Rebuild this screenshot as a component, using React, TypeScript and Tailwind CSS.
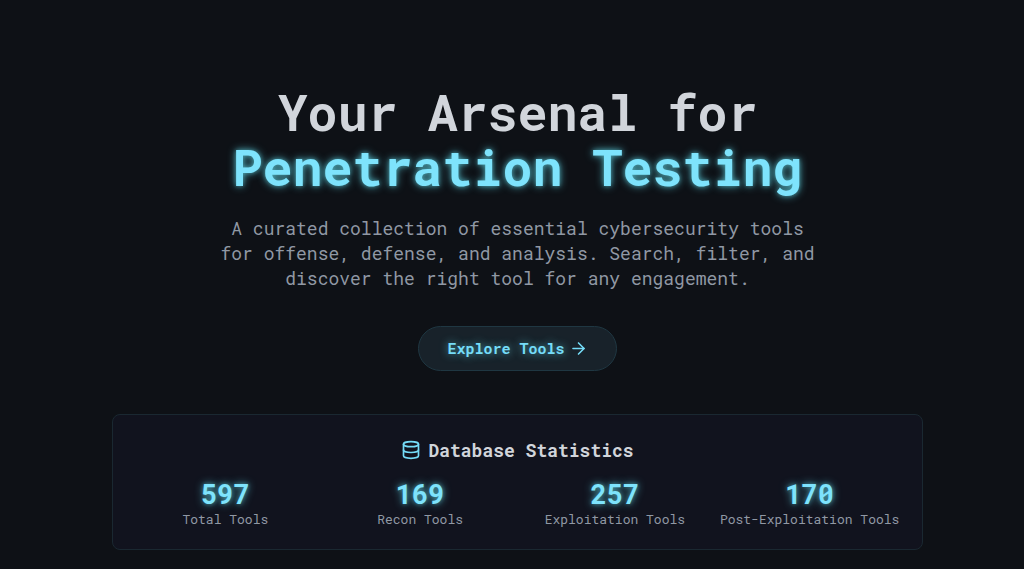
import { ArrowRight, Database } from "lucide-react";

const stats = [
  { value: 597, label: "Total Tools" },
  { value: 169, label: "Recon Tools" },
  { value: 257, label: "Exploitation Tools" },
  { value: 170, label: "Post-Exploitation Tools" },
];

function Hero() {
  return (
    <section className="flex flex-col items-center text-center">
      <h1 className="text-[50px] leading-[55px] font-bold text-[#d1d5db]">
        Your Arsenal for
        <span className="block text-[#7ee3fc] [text-shadow:0_0_8px_#67e8f9aa,0_0_4px_#67e8f966]">
          Penetration Testing
        </span>
      </h1>
      <p className="mt-[21px] max-w-[610px] text-[18px] leading-[25px] text-[#9098a4]">
        A curated collection of essential cybersecurity tools for offense, defense, and
        analysis. Search, filter, and discover the right tool for any engagement.
      </p>
      <a
        href="#tools"
        className="mt-[35px] inline-flex h-[45px] items-center gap-1 rounded-full border border-[#1f3742] bg-[#18222a] px-7 text-[15px] font-bold text-[#75dcf8] [text-shadow:0_0_8px_#67e8f9aa]"
      >
        Explore Tools
        <ArrowRight size={19} strokeWidth={2} aria-hidden="true" />
      </a>
    </section>
  );
}

function Statistics() {
  return (
    <section className="mt-[43px] w-full max-w-[811px] rounded-lg border border-[#1a2831] bg-[#11131e] px-[22px] pt-[22px] pb-[21px]">
      <h2 className="flex items-center justify-center gap-[7px] text-[18px] leading-[26px] font-bold text-[#d1d5db]">
        <Database size={20} strokeWidth={2} className="text-[#75dcf8]" aria-hidden="true" />
        Database Statistics
      </h2>
      <dl className="mt-[15px] grid grid-cols-4 gap-[14px] text-center">
        {stats.map((stat) => (
          <div key={stat.label} className="flex flex-col-reverse items-center">
            <dt className="text-[13px] leading-[18px] whitespace-nowrap text-[#9098a4]">
              {stat.label}
            </dt>
            <dd className="text-[27px] leading-8 font-bold text-[#7ee3fc] [text-shadow:0_0_8px_#67e8f9aa,0_0_4px_#67e8f966]">
              {stat.value}
            </dd>
          </div>
        ))}
      </dl>
    </section>
  );
}

export default function App() {
  return (
    <main className="flex min-h-screen flex-col items-center bg-[#0e1116] pt-[85px] pr-4 pb-5 pl-[27px] font-['Roboto_Mono','DejaVu_Sans_Mono',monospace]">
      <Hero />
      <Statistics />
    </main>
  );
}
